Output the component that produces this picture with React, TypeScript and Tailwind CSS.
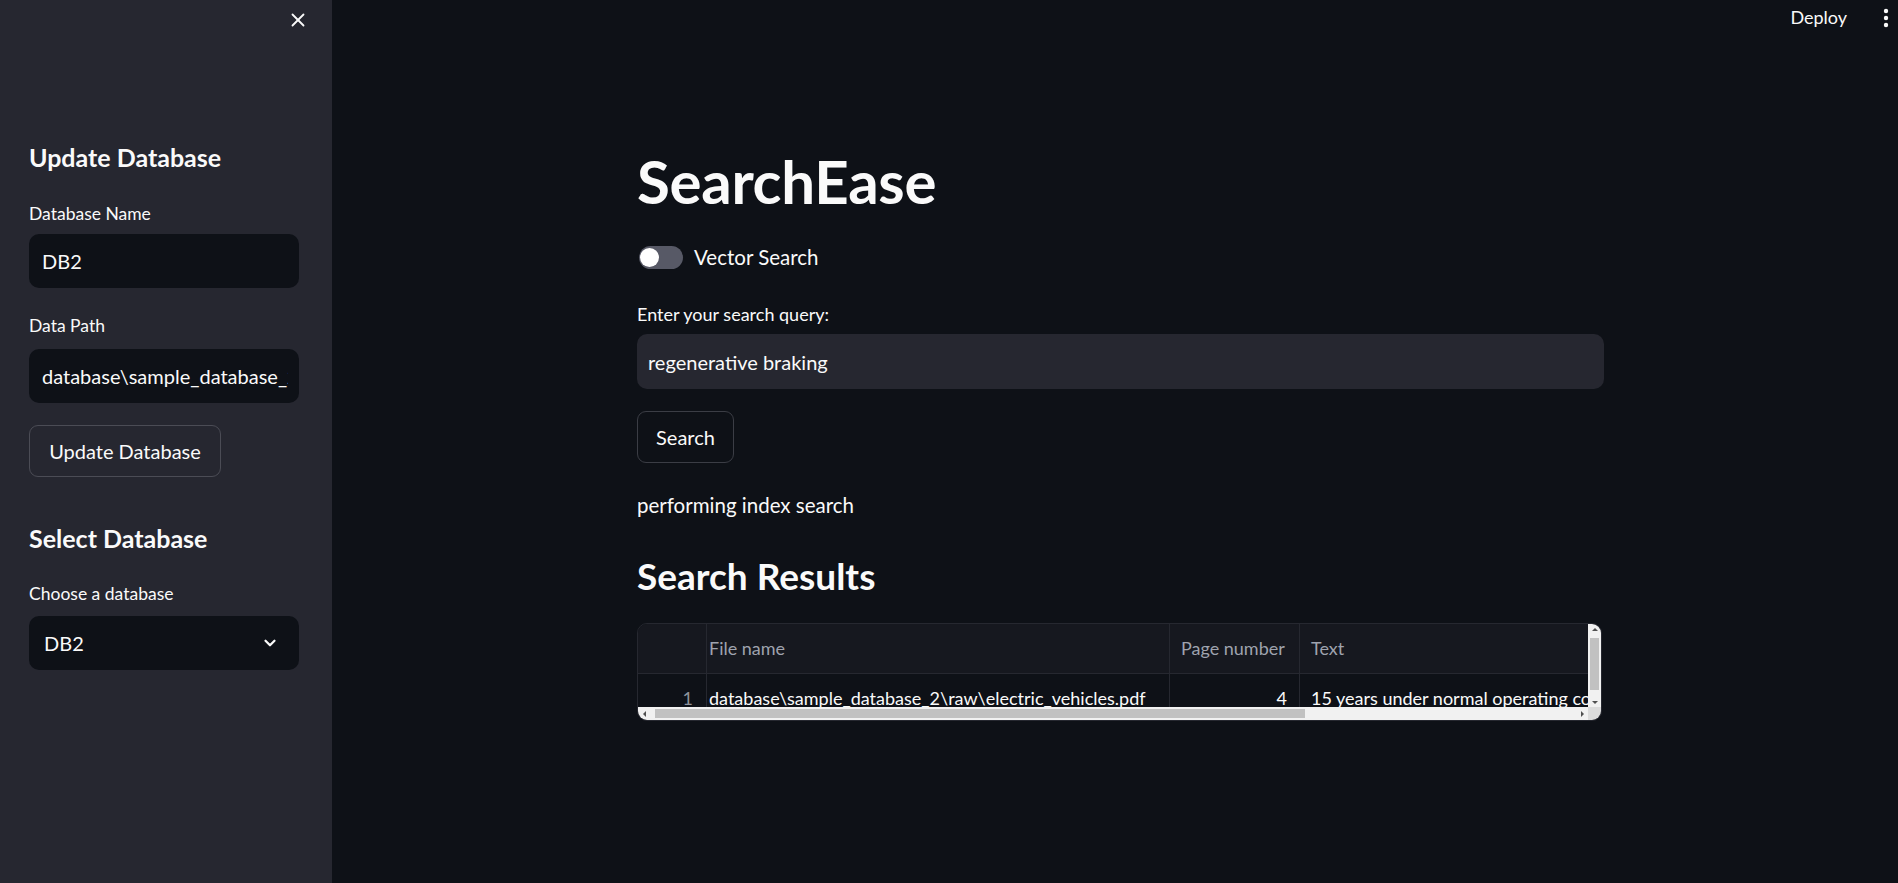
import { X, ChevronDown } from 'lucide-react';

const font = { fontFamily: 'Lato, "Noto Sans", sans-serif' };

function Label({ text }: { text: string }) {
  return <div className="h-[22px] flex items-center text-[17.5px] text-[#fafafa]">{text}</div>;
}

function SidebarInput({ value }: { value: string }) {
  return (
    <div className="h-[54px] rounded-[10px] bg-[#0e1117] pl-[13px] pr-[11px] flex items-center overflow-hidden">
      <span className="whitespace-nowrap overflow-hidden text-[20px] text-[#fafafa]">{value}</span>
    </div>
  );
}

function Sidebar() {
  return (
    <aside className="w-[332px] shrink-0 bg-[#262730] pl-[29px] pr-[33px] flex flex-col">
      <div className="h-[40px] flex items-center justify-end pr-[0px]">
        <X className="w-[22px] h-[22px] text-[#fafafa] mr-[-10px]" strokeWidth={2} />
      </div>

      <h3 className="mt-[102px] h-[32px] flex items-center text-[25px] font-bold text-[#fafafa]">Update Database</h3>
      <div className="mt-[29px]"><Label text="Database Name" /></div>
      <div className="mt-[9px]"><SidebarInput value="DB2" /></div>

      <div className="mt-[27px]"><Label text="Data Path" /></div>
      <div className="mt-[12px]"><SidebarInput value="database\sample_database_2\raw" /></div>

      <button className="mt-[22px] self-start h-[52px] w-[192px] rounded-[9px] border border-[#4b4c55] text-[20px] text-[#fafafa]">
        Update Database
      </button>

      <h3 className="mt-[46px] h-[32px] flex items-center text-[25px] font-bold text-[#fafafa]">Select Database</h3>
      <div className="mt-[28px]"><Label text="Choose a database" /></div>
      <div className="mt-[11px] h-[54px] rounded-[10px] bg-[#0e1117] pl-[15px] pr-[20px] flex items-center justify-between">
        <span className="text-[20px] text-[#fafafa]">DB2</span>
        <ChevronDown className="w-[18px] h-[18px] text-[#fafafa]" strokeWidth={3} />
      </div>
    </aside>
  );
}

function Arrow({ dir }: { dir: 'up' | 'down' | 'left' | 'right' }) {
  const pts = {
    up: '1,5 4,2 7,5',
    down: '1,3 4,6 7,3',
    left: '5,1 2,4 5,7',
    right: '3,1 6,4 3,7',
  }[dir];
  return (
    <svg width="8" height="8" viewBox="0 0 8 8">
      <polygon points={pts} fill="#505050" />
    </svg>
  );
}

function ResultsTable() {
  return (
    <div className="relative mt-[23px] h-[98px] w-[965px] rounded-[10px] border border-[#262830] overflow-hidden text-[18px]">
      <div className="flex h-[50px] bg-[#16181f] border-b border-[#262830] text-[#9fa3ae]">
        <div className="w-[69px] shrink-0 border-r border-[#262830]" />
        <div className="w-[463px] shrink-0 border-r border-[#262830] pl-[2px] flex items-center">File name</div>
        <div className="w-[130px] shrink-0 border-r border-[#262830] pl-[11px] flex items-center">Page number</div>
        <div className="flex-1 pl-[11px] flex items-center">Text</div>
      </div>
      <div className="flex h-[48px] text-[#fafafa]">
        <div className="w-[69px] shrink-0 border-r border-[#262830] pr-[13px] flex items-center justify-end text-[#8e919b]">1</div>
        <div className="w-[463px] shrink-0 border-r border-[#262830] pl-[2px] flex items-center whitespace-nowrap">
          database\sample_database_2\raw\electric_vehicles.pdf
        </div>
        <div className="w-[130px] shrink-0 border-r border-[#262830] pr-[12px] flex items-center justify-end">4</div>
        <div className="flex-1 pl-[11px] flex items-center whitespace-nowrap overflow-hidden">
          15 years under normal operating conditions, after which they can be repurposed
        </div>
      </div>

      {/* vertical scrollbar */}
      <div className="absolute right-0 top-0 w-[13px] h-[84px] bg-[#f1f1f1] flex flex-col items-center">
        <div className="h-[12px] flex items-center"><Arrow dir="up" /></div>
        <div className="w-[9px] h-[52px] mt-[2px] bg-[#c1c1c1]" />
        <div className="mt-auto h-[12px] flex items-center"><Arrow dir="down" /></div>
      </div>
      {/* horizontal scrollbar */}
      <div className="absolute left-0 bottom-0 w-[952px] h-[13px] bg-[#f1f1f1] flex items-center">
        <div className="w-[14px] flex justify-center"><Arrow dir="left" /></div>
        <div className="ml-[3px] w-[650px] h-[9px] bg-[#c1c1c1]" />
        <div className="ml-auto w-[16px] flex justify-center"><Arrow dir="right" /></div>
      </div>
      <div className="absolute right-0 bottom-0 w-[13px] h-[13px] bg-[#dcdcdc]" />
    </div>
  );
}

export default function App() {
  return (
    <div className="flex w-full h-[883px] bg-[#0e1117] overflow-hidden" style={font}>
      <Sidebar />
      <main className="flex-1 flex flex-col">
        <header className="h-[35px] flex items-center justify-end pr-[9px]">
          <span className="text-[18px] text-[#fafafa]">Deploy</span>
          <svg width="6" height="20" viewBox="0 0 6 20" className="ml-[36px]" fill="#fafafa">
            <circle cx="3" cy="3" r="2.2" />
            <circle cx="3" cy="10" r="2.2" />
            <circle cx="3" cy="17" r="2.2" />
          </svg>
        </header>

        <div className="ml-[305px] w-[967px] flex flex-col text-[#fafafa]">
          <h1 className="mt-[112px] h-[67px] flex items-center text-[60px] font-bold leading-none tracking-[-0.3px]">SearchEase</h1>

          <div className="mt-[31px] h-[24px] flex items-center">
            <div className="ml-[2px] w-[44px] h-[23px] rounded-full bg-[#575966] flex items-center pl-[1px]">
              <div className="w-[19px] h-[19px] rounded-full bg-white" />
            </div>
            <span className="ml-[11px] text-[20.5px]">Vector Search</span>
          </div>

          <div className="mt-[35px] h-[20px] flex items-center text-[18px]">Enter your search query:</div>
          <div className="mt-[10px] h-[55px] rounded-[10px] bg-[#262730] pl-[11px] flex items-center text-[20px]">
            regenerative braking
          </div>

          <button className="mt-[22px] self-start h-[52px] w-[97px] rounded-[9px] border border-[#3b3d45] bg-[#0e1117] text-[20px]">
            Search
          </button>

          <div className="mt-[28px] h-[28px] flex items-center text-[20.5px]">performing index search</div>

          <h2 className="mt-[33px] h-[48px] flex items-center text-[37px] font-bold">Search Results</h2>

          <ResultsTable />
        </div>
      </main>
    </div>
  );
}
